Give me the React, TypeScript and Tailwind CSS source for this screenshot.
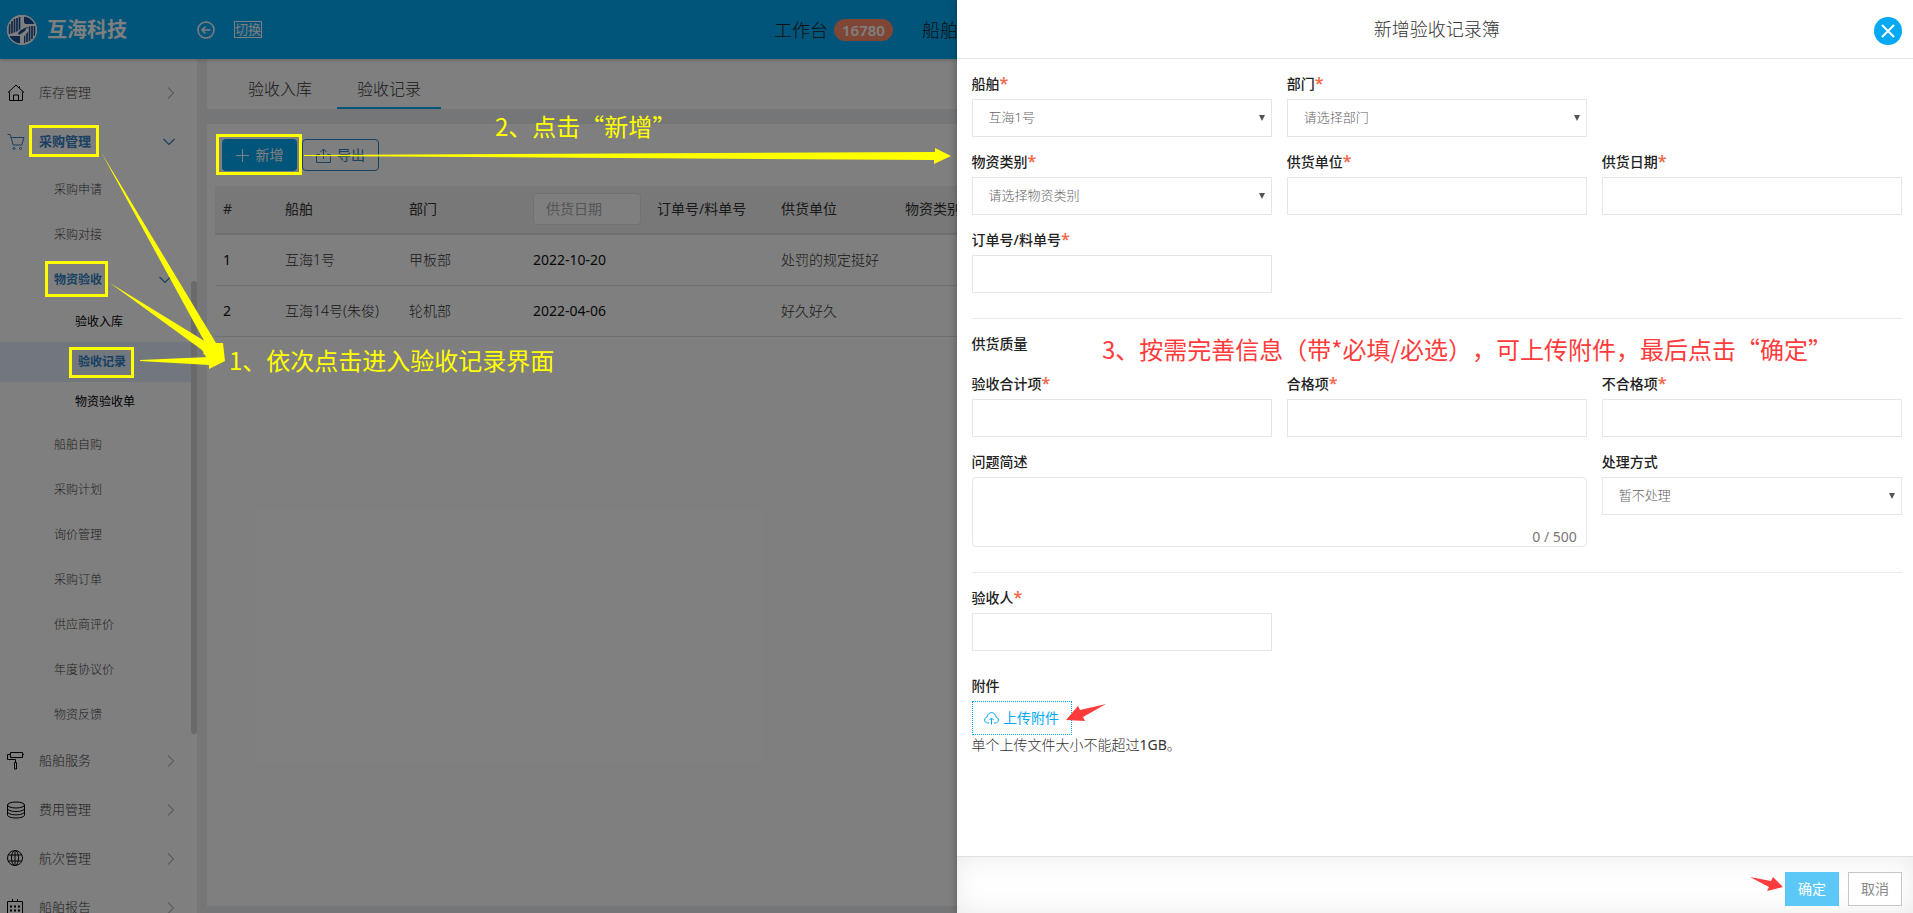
import type { ReactNode } from "react"

type Level = "top" | "sub" | "leaf"

type MenuItem = {
  label: string
  level: Level
  icon?: ReactNode
  active?: boolean
  open?: boolean
}

const HomeIcon = () => (
  <svg width="18" height="18" viewBox="0 0 18 18" fill="none" stroke="currentColor">
    <path d="M1 8.500 9 1l8 7.500M2.500 7.500v9h13v-9M6.500 16.500V11h5v5.500M12.500 2v2" />
  </svg>
)

const CartIcon = () => (
  <svg width="18" height="18" viewBox="0 0 18 18" fill="none" stroke="currentColor">
    <path d="M0.500 1.500h2.700l3 10.500h8.500L17 4.500H4.200" />
    <circle cx="7" cy="15.500" r="1" />
    <circle cx="13.500" cy="15.500" r="1" />
  </svg>
)

const RollerIcon = () => (
  <svg width="18" height="18" viewBox="0 0 18 18" fill="none" stroke="currentColor">
    <path d="M3.500 0.500h12v5h-12zM15.500 2.500h1.500M3.500 2.500h-3v5h8v3M7.500 10.500h2v6.500h-2z" />
  </svg>
)

const StackIcon = () => (
  <svg width="18" height="18" viewBox="0 0 18 18" fill="none" stroke="currentColor">
    <ellipse cx="9" cy="4" rx="8.500" ry="3" />
    <path d="M.5 4v10c0 1.700 3.800 3 8.500 3s8.500-1.300 8.500-3V4M.5 7.500c0 1.700 3.800 3 8.500 3s8.500-1.300 8.500-3M.5 10.800c0 1.700 3.800 3 8.500 3s8.500-1.300 8.500-3" />
  </svg>
)

const GlobeIcon = () => (
  <svg width="18" height="18" viewBox="0 0 18 18" fill="none" stroke="currentColor">
    <circle cx="8" cy="8" r="7.500" />
    <ellipse cx="8" cy="8" rx="3.500" ry="7.500" />
    <path d="M8 .5v15M1.500 5h13M1.500 11h13" />
  </svg>
)

const CalendarIcon = () => (
  <svg width="18" height="18" viewBox="0 0 18 18" fill="none" stroke="currentColor">
    <path d="M.5 2.500h15v14H.5zM5.500 0v3M10.500 0v3" />
    <path strokeWidth="2" strokeDasharray="2 2" d="M3 7.500h10M3 11.500h10" />
  </svg>
)

const menu: MenuItem[] = [
  { label: "库存管理", level: "top", icon: <HomeIcon /> },
  { label: "采购管理", level: "top", icon: <CartIcon />, active: true, open: true },
  { label: "采购申请", level: "sub" },
  { label: "采购对接", level: "sub" },
  { label: "物资验收", level: "sub", active: true, open: true },
  { label: "验收入库", level: "leaf" },
  { label: "验收记录", level: "leaf", active: true },
  { label: "物资验收单", level: "leaf" },
  { label: "船舶自购", level: "sub" },
  { label: "采购计划", level: "sub" },
  { label: "询价管理", level: "sub" },
  { label: "采购订单", level: "sub" },
  { label: "供应商评价", level: "sub" },
  { label: "年度协议价", level: "sub" },
  { label: "物资反馈", level: "sub" },
  { label: "船舶服务", level: "top", icon: <RollerIcon /> },
  { label: "费用管理", level: "top", icon: <StackIcon /> },
  { label: "航次管理", level: "top", icon: <GlobeIcon /> },
  { label: "船舶报告", level: "top", icon: <CalendarIcon /> },
]

const rows = [
  { id: 1, ship: "互海1号", dept: "甲板部", date: "2022-10-20", supplier: "处罚的规定挺好" },
  { id: 2, ship: "互海14号(朱俊)", dept: "轮机部", date: "2022-04-06", supplier: "好久好久" },
]

const ChevronDown = () => (
  <svg width="12" height="8" viewBox="0 0 12 8" fill="none" stroke="currentColor" strokeWidth="1.200">
    <path d="M.5 1 6 6.500 11.500 1" />
  </svg>
)

const ChevronRight = () => (
  <svg width="8" height="12" viewBox="0 0 8 12" fill="none" stroke="#bbb" strokeWidth="1.200">
    <path d="M1 .5 6.500 6 1 11.500" />
  </svg>
)

const SideItem = ({ item }: { item: MenuItem }) => {
  const tone = item.active ? "font-bold text-[#2f80c4]" : ""

  if (item.level === "top") {
    return (
      <li>
        <a
          href="#"
          className={`flex h-[49px] items-center pb-0.5 pl-[7px] pr-[22px] text-[13px] ${tone || "font-light text-[#444]"}`}
        >
          <span className={item.active ? "w-8" : "w-8 text-black"}>{item.icon}</span>
          <span className="flex-1">{item.label}</span>
          {item.open ? <ChevronDown /> : <ChevronRight />}
        </a>
      </li>
    )
  }

  if (item.level === "sub") {
    return (
      <li>
        <a
          href="#"
          className={`flex h-[45px] items-center pl-[54px] pr-[26px] text-xs ${tone || "font-light text-[#444]"}`}
        >
          <span className="flex-1">{item.label}</span>
          {item.open && <ChevronDown />}
        </a>
      </li>
    )
  }

  return (
    <li>
      <a
        href="#"
        className={`flex h-10 items-center text-xs ${item.active ? "bg-[#e4ecfa] pl-[78px]" : "pl-[75px] text-black"} ${tone}`}
      >
        {item.label}
      </a>
    </li>
  )
}

const Logo = () => (
  <svg width="30" height="30" viewBox="0 0 30 30">
    <circle cx="15" cy="15" r="15" fill="#fff" />
    <g fill="none" stroke="#1d4f91" strokeWidth="1.700">
      <path d="M2.500 9v10M5 6v13M7.500 4v15M10 3v16M12.500 2v14" />
      <path d="M27.500 11v10M25 11v13M22.500 11v15M20 12v15M17.500 14v14" />
    </g>
    <path d="M17 1.500C22 2 26.500 5 28 9H17zM13 28.500C8 28 3.500 25 2 21h11z" fill="#1d4f91" />
    <path d="M13 .5h4v9h11l-9 3-5 4-1 3H2l8-3 7-5 1 2-5 5v10h4v-7l5-6" fill="#fff" />
    <path d="m11 18 3-3 6-3-2 4-6 4z" fill="#1d4f91" />
    <circle cx="15" cy="15" r="14.400" fill="none" stroke="#fff" strokeWidth="1.200" />
  </svg>
)

const Header = () => (
  <header className="relative z-10 flex h-[59px] items-center bg-[#03a9f4] shadow-[0_1px_4px_rgba(0,0,0,0.2)]">
    <div className="flex w-[197px] items-center gap-[10px] pl-[7px]">
      <Logo />
      <span className="text-xl font-bold text-white">互海科技</span>
    </div>
    <button type="button" aria-label="返回" className="text-white">
      <svg width="18" height="18" viewBox="0 0 18 18" fill="none" stroke="currentColor" strokeWidth="1.500">
        <circle cx="9" cy="9" r="8" />
        <path d="M13.500 9H5M8.500 5.500 5 9l3.500 3.500" />
      </svg>
    </button>
    <button
      type="button"
      className="ml-[19px] h-[17px] w-7 whitespace-nowrap border border-white text-[13px] leading-[15px] text-white"
    >
      切换
    </button>
    <nav className="absolute left-[774px] flex items-center text-lg font-light text-[#222]">
      <a href="#" className="flex items-center gap-[6px]">
        工作台
        <span className="h-[22px] rounded-full bg-[#ff8c6c] px-2 text-[15px] leading-[22px] font-semibold text-white">
          16780
        </span>
      </a>
      <a href="#" className="ml-[29px]">
        船舶
      </a>
    </nav>
  </header>
)

const Sidebar = () => (
  <aside className="relative w-[197px] shrink-0 overflow-hidden bg-white">
    <ul className="pt-[10px]">
      {menu.map((item) => (
        <SideItem key={item.label} item={item} />
      ))}
    </ul>
    {/* scrollbar thumb */}
    <div className="absolute top-[222px] right-0 h-[453px] w-[6px] rounded-full bg-[#d4d4d4]" />
  </aside>
)

const Records = () => (
  <main className="flex min-w-0 flex-1 flex-col gap-[15px] bg-[#e9ecf0] pr-[10px] pb-[7px] pl-[10px]">
    <div className="flex h-[50px] shrink-0 gap-[5px] bg-white pl-[21px] text-base font-light text-[#333]">
      <a href="#" className="px-5 pt-[18px]">
        验收入库
      </a>
      <a href="#" className="border-b-2 border-[#03a9f4] px-5 pt-[18px]">
        验收记录
      </a>
    </div>

    <div className="flex-1 bg-white px-2 pt-[15px]">
      <div className="mb-[15px] flex gap-[5px] px-[7px] text-sm">
        <button
          type="button"
          className="flex h-8 w-[75px] items-center justify-center gap-[7px] rounded bg-[#03a9f4] text-white"
        >
          <svg width="13" height="13" viewBox="0 0 13 13" stroke="currentColor">
            <path d="M6.500 0v13M0 6.500h13" />
          </svg>
          新增
        </button>
        <button
          type="button"
          className="flex h-8 w-[77px] items-center justify-center gap-[6px] rounded border border-[#2f80c4] text-[#2f80c4]"
        >
          <svg width="15" height="15" viewBox="0 0 15 15" fill="none" stroke="currentColor">
            <path d="M4 6.500H.5v8h14v-8H11M7.500 11V1M4.500 4l3-3 3 3" />
          </svg>
          导出
        </button>
      </div>

      <table className="w-full table-fixed text-left text-sm text-[#333]">
        <thead>
          <tr className="h-12 border-b-2 border-[#e0e0e0] bg-[#f0f0f0]">
            <th className="w-[62px] px-2 pb-0.5 font-normal">#</th>
            <th className="w-[124px] px-2 pb-0.5 font-normal">船舶</th>
            <th className="w-[124px] px-2 pb-0.5 font-normal">部门</th>
            <th className="w-[124px] px-2 pb-0.5 font-normal">
              <input
                type="text"
                aria-label="供货日期"
                placeholder="供货日期"
                className="block h-8 w-full rounded border border-[#e5e5e5] bg-white px-3 text-sm placeholder:text-[#aaa]"
              />
            </th>
            <th className="w-[124px] px-2 pb-0.5 font-normal">订单号/料单号</th>
            <th className="w-[124px] px-2 pb-0.5 font-normal">供货单位</th>
            <th className="px-2 pb-0.5 font-normal">物资类别</th>
          </tr>
        </thead>
        <tbody>
          {rows.map((row) => (
            <tr key={row.id} className="h-[51px] border-b border-[#e0e0e0] font-light">
              <td className="px-2 font-normal text-[#111]">{row.id}</td>
              <td className="px-2">{row.ship}</td>
              <td className="px-2">{row.dept}</td>
              <td className="px-2 font-normal text-[#111]">{row.date}</td>
              <td className="px-2" />
              <td className="px-2">{row.supplier}</td>
              <td className="px-2" />
            </tr>
          ))}
        </tbody>
      </table>
    </div>
  </main>
)

type FieldProps = {
  id: string
  label: string
  required?: boolean
  className?: string
  children: ReactNode
}

const Field = ({ id, label, required, className = "", children }: FieldProps) => (
  <div className={className}>
    <label htmlFor={id} className="mb-[5px] block h-5 text-sm leading-5 font-medium text-[#222]">
      {label}
      {required && <span className="text-base leading-none font-semibold text-[#f0694a]">*</span>}
    </label>
    {children}
  </div>
)

const TextField = ({ id, label, required }: { id: string; label: string; required?: boolean }) => (
  <Field id={id} label={label} required={required}>
    <input id={id} type="text" className="block h-[38px] w-full border border-[#e4e6e8] px-4 text-[13px]" />
  </Field>
)

const SelectField = ({
  id,
  label,
  value,
  required,
}: {
  id: string
  label: string
  value: string
  required?: boolean
}) => (
  <Field id={id} label={label} required={required}>
    <div className="relative">
      <select
        id={id}
        className="block h-[38px] w-full appearance-none border border-[#e4e6e8] bg-white px-4 text-[13px] font-light text-[#666]"
      >
        <option>{value}</option>
      </select>
      <svg
        className="pointer-events-none absolute top-4 right-[7px]"
        width="6"
        height="6"
        viewBox="0 0 6 6"
        fill="#555"
      >
        <path d="M0 0h6L3 6z" />
      </svg>
    </div>
  </Field>
)

const Drawer = () => (
  <section className="absolute inset-y-0 right-0 z-30 flex w-1/2 flex-col bg-white shadow-[0_0_8px_rgba(0,0,0,0.3)]">
    <div className="relative flex h-[59px] shrink-0 items-center justify-center border-b border-[#e5e5e5] pl-1">
      <h2 className="text-lg font-light text-[#333]">新增验收记录簿</h2>
      <button
        type="button"
        aria-label="关闭"
        className="absolute top-[17px] right-[11px] flex size-7 items-center justify-center rounded-full bg-[#03a9f4]"
      >
        <svg width="14" height="14" viewBox="0 0 14 14" stroke="#fff" strokeWidth="2">
          <path d="m1 1 12 12M13 1 1 13" />
        </svg>
      </button>
    </div>

    <form className="flex-1 overflow-hidden pt-[15px] pr-[11px] pl-[15px]">
      <div className="grid grid-cols-3 gap-[15px]">
        <SelectField id="ship" label="船舶" value="互海1号" required />
        <SelectField id="dept" label="部门" value="请选择部门" required />
        <div />
        <SelectField id="category" label="物资类别" value="请选择物资类别" required />
        <TextField id="supplier" label="供货单位" required />
        <TextField id="date" label="供货日期" required />
        <TextField id="order" label="订单号/料单号" required />
      </div>

      <hr className="mt-[25px] mb-[15px] border-[#ebebeb]" />
      <h3 className="mb-5 text-sm leading-5 font-medium text-[#222]">供货质量</h3>
      <div className="grid grid-cols-3 gap-[15px]">
        <TextField id="total" label="验收合计项" required />
        <TextField id="passed" label="合格项" required />
        <TextField id="failed" label="不合格项" required />
        <Field id="problem" label="问题简述" className="col-span-2">
          <div className="relative">
            <textarea
              id="problem"
              className="block h-[70px] w-full resize-none rounded border border-[#e4e6e8] px-4 py-2 text-[13px]"
            />
            <span className="absolute right-[10px] bottom-0 text-sm leading-5 text-[#777]">0 / 500</span>
          </div>
        </Field>
        <SelectField id="handling" label="处理方式" value="暂不处理" />
      </div>

      <hr className="mt-[25px] mb-[15px] border-[#ebebeb]" />
      <div className="mb-[25px] grid grid-cols-3 gap-[15px]">
        <TextField id="inspector" label="验收人" required />
      </div>

      <Field id="upload" label="附件">
        <button
          id="upload"
          type="button"
          className="flex h-[34px] w-[100px] items-center justify-center gap-1 border border-dotted border-[#03a9f4] text-sm text-[#03a9f4]"
        >
          <svg width="15" height="13" viewBox="0 0 15 13" fill="none" stroke="currentColor">
            <path d="M5 11H3.800C2 11 .6 9.800.6 8c0-1.500 1-2.700 2.400-3C3.300 2.500 5.200.6 7.500.6S11.700 2.500 12 5c1.400.3 2.400 1.500 2.400 3 0 1.800-1.400 3-3.200 3H10M7.500 12.500v-6M5.500 8l2-2 2 2" />
          </svg>
          上传附件
        </button>
      </Field>
      <p className="text-sm leading-5 font-light text-[#333]">
        单个上传文件大小不能超过<span className="font-normal">1GB</span>。
      </p>
    </form>

    <div className="flex h-[57px] shrink-0 items-start justify-end gap-[9px] border-t border-[#e2e2e2] bg-[#fefefe] pt-[15px] pr-[11px] text-sm shadow-[inset_0_0_24px_rgba(0,0,0,0.08)]">
      <button type="button" className="h-[34px] w-[54px] bg-[#5bc8f8] text-white">
        确定
      </button>
      <button type="button" className="h-[34px] w-[54px] border border-[#c4c6ca] bg-white text-[#888]">
        取消
      </button>
    </div>
  </section>
)

/* Step-by-step guide drawn over the page */
const Guide = () => (
  <div className="pointer-events-none absolute inset-0 z-40 font-['Noto_Sans_CJK_SC',sans-serif] text-2xl whitespace-nowrap [text-spacing-trim:space-all]">
    <svg className="absolute inset-0 size-full">
      <g fill="none" stroke="#ff0" strokeWidth="3">
        <rect x="30.500" y="126.500" width="67" height="29" />
        <rect x="46.500" y="262.500" width="60" height="33" />
        <rect x="70.500" y="348.500" width="62" height="28" />
        <rect x="217.500" y="135.500" width="83" height="38" />
      </g>
      <g fill="#ff0">
        <path d="M101 152 216 343 223 343 225 361 203 354 208 348z" />
        <path d="M110 283 211 345 225 361 206 357 202 350z" />
        <path d="M140 360 209 357V351L225 361 209 369V365L140 361z" />
        <path d="M304 155 935 152V148L951 156 934 164V160L304 156z" />
      </g>
      <g fill="#ff3b3b">
        <path d="M1066 720 1078 706 1080 710 1106 704 1083 717 1085 721z" />
        <path d="M1750 877 1771 881 1773 877 1783 887 1767 891 1769 887z" />
      </g>
    </svg>
    <p className="absolute top-[342px] left-[229px] leading-9 text-[#ff0]">1、依次点击进入验收记录界面</p>
    <p className="absolute top-[108px] left-[495px] leading-9 text-[#ff0]">2、点击“新增”</p>
    <p className="absolute top-[331px] left-[1102px] leading-9 text-[#ff3b3b]">
      3、按需完善信息（带*必填/必选），可上传附件，最后点击“确定”
    </p>
  </div>
)

export default function App() {
  return (
    <div
      lang="zh-CN"
      className="relative flex h-screen flex-col overflow-hidden font-['Noto_Sans','Noto_Sans_CJK_SC',sans-serif]"
    >
      <Header />
      <div className="flex min-h-0 flex-1">
        <Sidebar />
        <Records />
      </div>
      <div className="absolute inset-0 z-20 bg-black/50" />
      <Drawer />
      <Guide />
    </div>
  )
}
